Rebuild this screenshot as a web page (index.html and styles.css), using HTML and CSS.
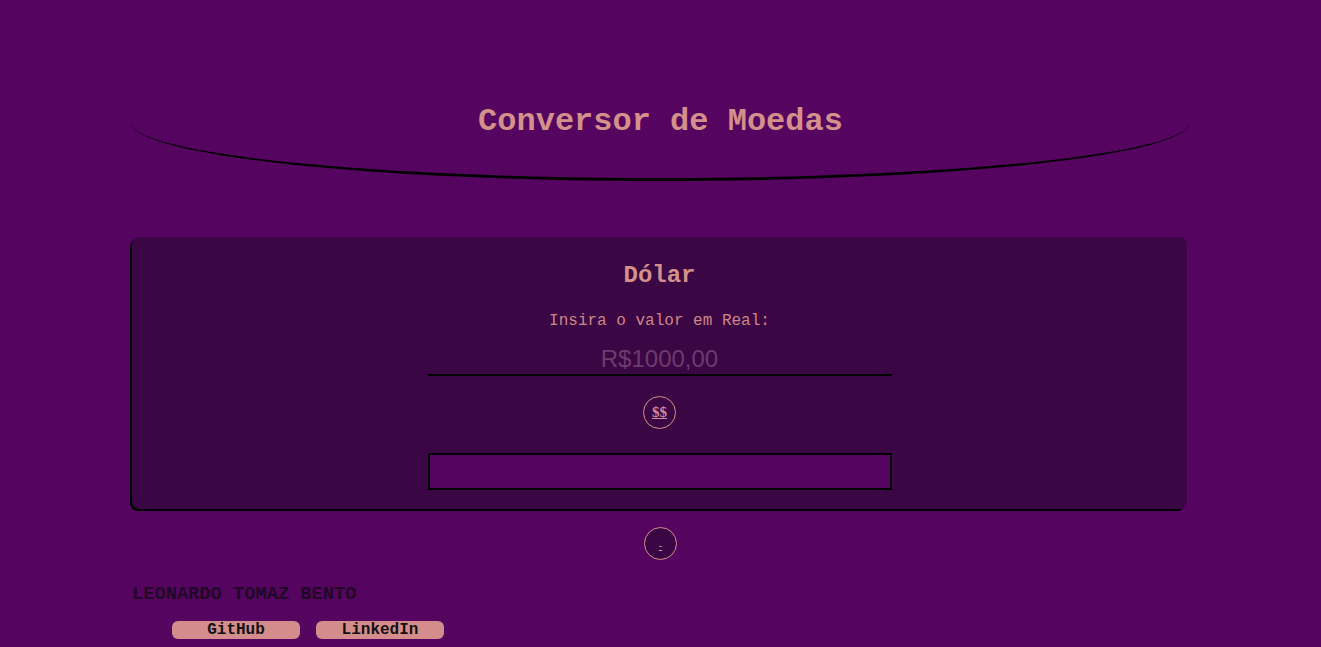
FILE: index.html
```html
<!DOCTYPE html>
<html lang="pt-BR">
<head>
<meta charset="utf-8">
<title>Conversor de Moedas</title>
<link rel="stylesheet" href="styles.css">
</head>
<body>
<header class="topo">
  <h1 class="titulo">Conversor de Moedas</h1>
</header>
<main class="cartao">
  <h2 class="moeda">Dólar</h2>
  <p class="rotulo">Insira o valor em Real:</p>
  <input class="entrada" type="text" placeholder="R$1000,00">
  <div class="linha-botao">
    <button class="circulo"><span class="sinal">$$</span></button>
  </div>
  <div class="resultado"></div>
</main>
<div class="linha-botao fora">
  <button class="circulo escuro"><span class="menos">-</span></button>
</div>
<footer class="rodape">
  <h3 class="autor">LEONARDO TOMAZ BENTO</h3>
  <div class="links">
    <button class="link">GitHub</button>
    <button class="link">LinkedIn</button>
  </div>
</footer>
</body>
</html>
```
FILE: styles.css
```css
* { box-sizing: border-box; }
html, body { margin: 0; padding: 0; }
body {
  background: #550560;
  font-family: "Liberation Mono", "Courier New", monospace;
  color: #d4908a;
  overflow: hidden;
  height: 647px;
}
.topo {
  width: 80%;
  margin: 0 auto;
  padding-top: 102px;
  height: 181px;
  border-bottom: 3px solid #000;
  border-radius: 0 0 50% 50% / 0 0 58px 58px;
}
.titulo {
  margin: 0;
  font-size: 32px;
  line-height: 40px;
  text-align: center;
  font-weight: bold;
  color: #d4908a;
}
.cartao {
  width: 1055px;
  margin: 56px auto 0 132px;
  background: #3a0744;
  border-radius: 8px;
  box-shadow: -2px 2px 0 #000;
  padding: 25px 0 19px;
  display: flex;
  flex-direction: column;
  align-items: center;
}
.moeda {
  margin: 0;
  font-size: 24px;
  line-height: 28px;
  font-weight: bold;
  color: #d4908a;
}
.rotulo {
  margin: 21px 0 0;
  font-size: 16px;
  line-height: 20px;
  color: #d0858a;
}
.entrada {
  margin-top: 12px;
  width: 464px;
  height: 33px;
  background: transparent;
  border: none;
  border-bottom: 2px solid #000;
  font-family: "Liberation Sans", Arial, sans-serif;
  font-size: 24px;
  text-align: center;
  color: #d4908a;
  outline: none;
  padding: 0;
}
.entrada::placeholder { color: #6f3a6d; }
.linha-botao {
  display: flex;
  justify-content: center;
  margin-top: 20px;
}
.circulo {
  width: 33px;
  height: 33px;
  border-radius: 50%;
  border: 1px solid #d4908a;
  background: transparent;
  padding: 0;
  display: flex;
  align-items: center;
  justify-content: center;
  cursor: pointer;
}
.sinal {
  font-family: "Liberation Serif", "Times New Roman", serif;
  font-weight: bold;
  font-size: 15px;
  line-height: 15px;
  color: #c98a9e;
  text-decoration: underline;
}
.resultado {
  margin-top: 24px;
  width: 464px;
  height: 37px;
  border: 2px solid #000;
  background: #550560;
}
.fora { margin-top: 18px; }
.escuro { background: #3a0744; }
.menos {
  font-family: "Liberation Sans", Arial, sans-serif;
  font-size: 10px;
  color: #d4908a;
  text-decoration: underline;
  margin-top: 4px;
}
.rodape {
  padding-left: 132px;
}
.autor {
  margin: 23px 0 0;
  font-size: 18.72px;
  line-height: 22px;
  font-weight: bold;
  color: #200826;
}
.links {
  display: flex;
  gap: 16px;
  padding-left: 40px;
  margin-top: 16px;
}
.link {
  width: 128px;
  height: 18px;
  border: none;
  border-radius: 6px;
  background: #d48c8c;
  font-family: "Liberation Mono", "Courier New", monospace;
  font-weight: bold;
  font-size: 16px;
  line-height: 18px;
  color: #111;
  padding: 0;
}
```
